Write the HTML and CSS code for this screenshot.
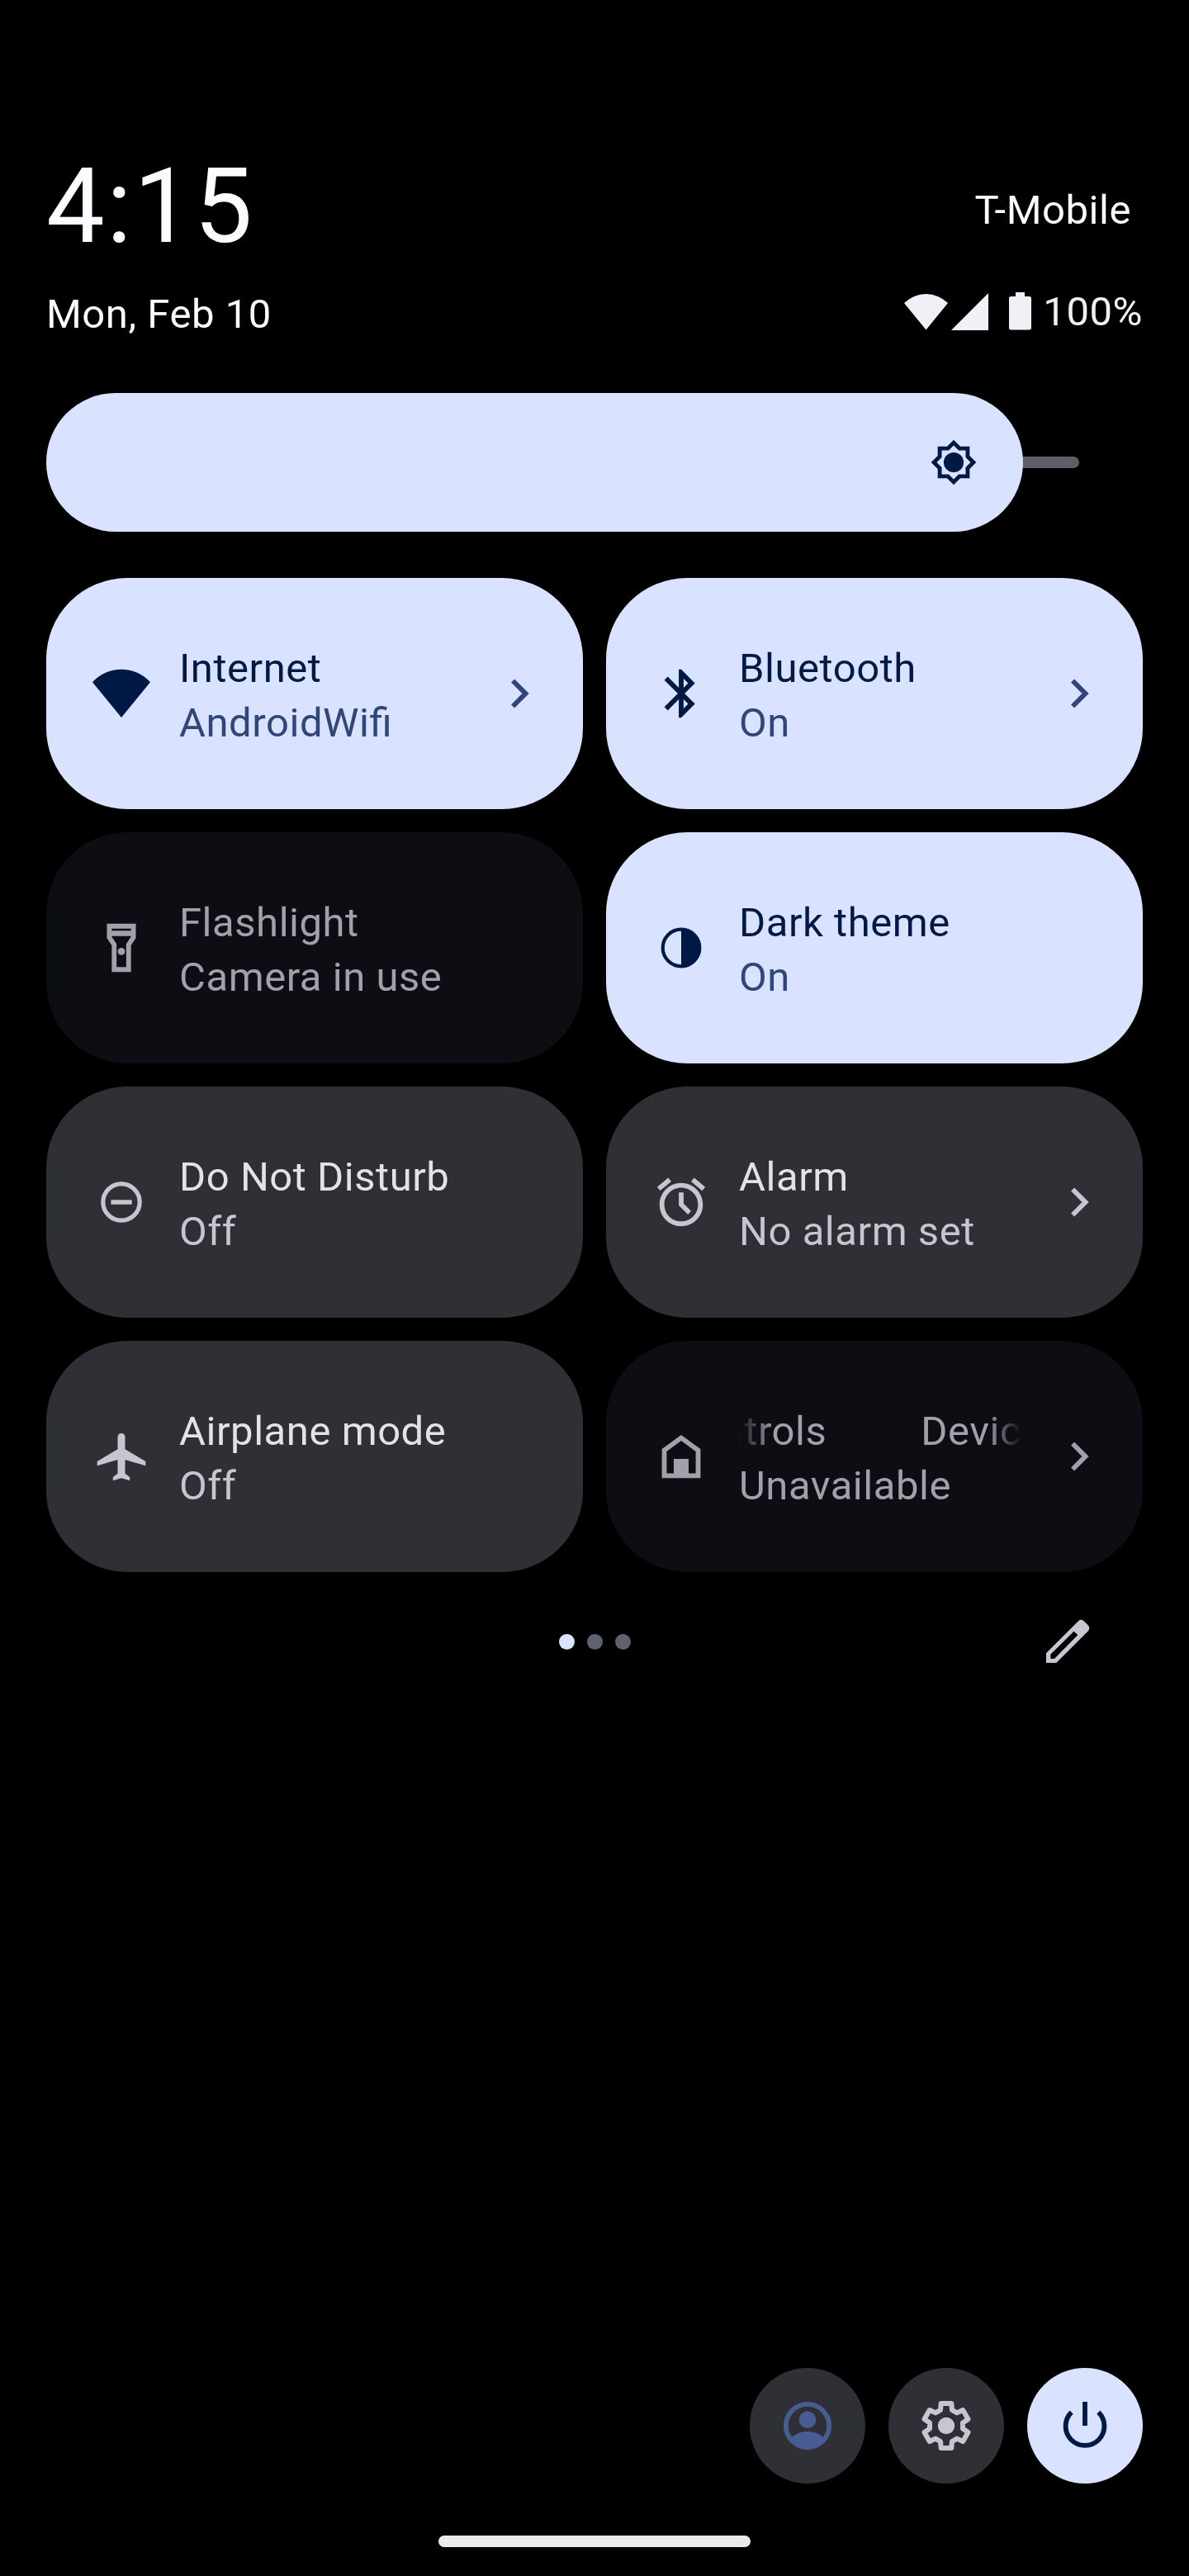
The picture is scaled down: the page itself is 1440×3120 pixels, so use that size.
FILE: index.html
```html
<!DOCTYPE html>
<html lang="en">
<head>
<meta charset="utf-8">
<title>Quick Settings</title>
<link rel="stylesheet" href="styles.css">
</head>
<body>
<header class="header">
  <div class="header-row header-row--clock">
    <div class="clock">4:15</div>
    <div class="carrier">T-Mobile</div>
  </div>
  <div class="header-row header-row--date">
    <div class="date">Mon, Feb 10</div>
    <div class="status">
      <svg class="status-wifi" viewBox="0 0 53 45"><path d="M0 12A37.500 37.500 0 0 1 53 12L26.500 44.500Z"/></svg>
      <svg class="status-signal" viewBox="0 0 45 45"><path d="M45 0V45H0Z"/></svg>
      <svg class="status-battery" viewBox="0 0 27 47"><path d="M8 0H19V5H24.500a2.500 2.500 0 0 1 2.500 2.500V43a2.500 2.500 0 0 1-2.500 2.500H2.500A2.500 2.500 0 0 1 0 43V7.500A2.500 2.500 0 0 1 2.500 5H8Z"/></svg>
      <span>100%</span>
    </div>
  </div>
</header>

<div class="brightness">
  <div class="brightness-fill">
    <svg class="brightness-icon" viewBox="0 0 24 24"><path fill-rule="evenodd" d="M20 15.310L23.310 12 20 8.690V4h-4.690L12 .690 8.690 4H4v4.690L.690 12 4 15.310V20h4.690L12 23.310 15.310 20H20zM18 14.480V18h-3.520L12 20.480 9.520 18H6v-3.520L3.520 12 6 9.520V6h3.520L12 3.520 14.480 6H18v3.520L20.480 12z"/><circle cx="12" cy="12" r="5"/></svg>
  </div>
  <div class="brightness-rail"></div>
</div>

<main class="tiles">
  <section class="tile tile--on">
    <svg class="tile-icon" viewBox="0 0 70 70"><path d="M0 21.300A47.100 47.100 0 0 1 70 21.300L35 64Z"/></svg>
    <div class="tile-text"><div class="tile-label">Internet</div><div class="tile-state">AndroidWifi</div></div>
    <svg class="tile-chevron" viewBox="0 0 24 24"><path d="M10 6L8.590 7.410 13.170 12l-4.580 4.590L10 18l6-6z"/></svg>
  </section>
  <section class="tile tile--on">
    <svg class="tile-icon" viewBox="0 0 24 24"><path fill-rule="evenodd" d="M17.710 7.710L12 2h-1v7.590L6.410 5 5 6.410 10.590 12 5 17.590 6.410 19 11 14.410V22h1l5.710-5.710-4.300-4.290 4.300-4.290zM13 5.830l1.880 1.880L13 9.590V5.830zm1.880 10.460L13 18.170v-3.760l1.880 1.880z"/></svg>
    <div class="tile-text"><div class="tile-label">Bluetooth</div><div class="tile-state">On</div></div>
    <svg class="tile-chevron" viewBox="0 0 24 24"><path d="M10 6L8.590 7.410 13.170 12l-4.580 4.590L10 18l6-6z"/></svg>
  </section>
  <section class="tile tile--disabled">
    <svg class="tile-icon" viewBox="0 0 24 24"><path fill-rule="evenodd" d="M18 2H6v6l2 3v11h8V11l2-3V2zM16 4v.900H8V4h8zM14 10.400V20h-4v-9.610l-2-3V7.100h8v.290l-2 3.010z"/><circle cx="12" cy="13.500" r="1.500"/></svg>
    <div class="tile-text"><div class="tile-label">Flashlight</div><div class="tile-state">Camera in use</div></div>
  </section>
  <section class="tile tile--on">
    <svg class="tile-icon" viewBox="0 0 70 70"><circle cx="35" cy="35" r="22.300" fill="none" stroke="currentColor" stroke-width="4.200"/><path d="M35 11a24 24 0 0 1 0 48z"/></svg>
    <div class="tile-text"><div class="tile-label">Dark theme</div><div class="tile-state">On</div></div>
  </section>
  <section class="tile tile--off">
    <svg class="tile-icon" viewBox="0 0 70 70"><circle cx="35" cy="35" r="22.200" fill="none" stroke="currentColor" stroke-width="5.200"/><path d="M22.500 32.300h25.200v5.500H22.500z"/></svg>
    <div class="tile-text"><div class="tile-label">Do Not Disturb</div><div class="tile-state">Off</div></div>
  </section>
  <section class="tile tile--off">
    <svg class="tile-icon" viewBox="0 0 24 24"><path fill-rule="evenodd" d="M22 5.720l-4.600-3.860-1.290 1.530 4.600 3.860L22 5.720zM7.880 3.390L6.600 1.860 2 5.710l1.290 1.530 4.590-3.850zM11 8h2v4.600l3.100 3.100-1.300 1.400L11 13.400zM12 4c-4.970 0-9 4.030-9 9s4.020 9 9 9c4.970 0 9-4.030 9-9s-4.030-9-9-9zm0 16c-3.870 0-7-3.130-7-7s3.130-7 7-7 7 3.130 7 7-3.130 7-7 7z"/></svg>
    <div class="tile-text"><div class="tile-label">Alarm</div><div class="tile-state">No alarm set</div></div>
    <svg class="tile-chevron" viewBox="0 0 24 24"><path d="M10 6L8.590 7.410 13.170 12l-4.580 4.590L10 18l6-6z"/></svg>
  </section>
  <section class="tile tile--off">
    <svg class="tile-icon" viewBox="-35 -35 70 70"><path d="M-4.500-23.500a4.500 4.500 0 0 1 9 0V-8.700L29.300 6V11.300L4.500 4V20.700L10.200 25V29.200L0 26.300-10.200 29.200V25L-4.500 20.700V4L-29.300 11.300V6L-4.500-8.700Z"/></svg>
    <div class="tile-text"><div class="tile-label">Airplane mode</div><div class="tile-state">Off</div></div>
  </section>
  <section class="tile tile--disabled">
    <svg class="tile-icon" viewBox="-35 -35 70 70"><path fill-rule="evenodd" d="M0-26L23.400-9V26.300H-23.400V-9ZM0-19L-17.600-6V20.400H-9V3H9V20.400H17.600V-6Z"/></svg>
    <div class="tile-text">
      <div class="tile-label tile-label--marquee"><span class="marquee-out">Device controls</span><span>Device controls</span></div>
      <div class="tile-state">Unavailable</div>
    </div>
    <svg class="tile-chevron" viewBox="0 0 24 24"><path d="M10 6L8.590 7.410 13.170 12l-4.580 4.590L10 18l6-6z"/></svg>
  </section>
</main>

<div class="pager">
  <div class="dots"><i class="dot dot--current"></i><i class="dot"></i><i class="dot"></i></div>
  <svg class="edit" viewBox="54 69 210 210"><path fill-rule="evenodd" d="M81 217L197 101Q208 90 219 101L232 114Q244 126 232 138L118 252H81ZM97 221V237H111L196 151 182 137Z"/></svg>
</div>

<footer class="footer">
  <div class="action action--user">
    <svg viewBox="-35 -35 70 70"><circle r="26.200" fill="none" stroke="currentColor" stroke-width="5.800"/><circle cy="-7.300" r="10.200"/><path d="M-19.500 14C-14 9.500-7 7 0 7s14 2.500 19.500 7L18 21 0 28-18 21Z"/></svg>
  </div>
  <div class="action">
    <svg viewBox="-35 -35 70 70"><circle r="10.200"/><path fill="none" stroke="currentColor" stroke-width="6" stroke-linejoin="round" d="M-6.300-27L6.300-27 7-19.100 13-15.600 20.200-19 26.500-8 20-3.500V3.500L26.500 8 20.200 19 13 15.600 7 19.100 6.300 27H-6.300L-7 19.100-13 15.600-20.200 19-26.500 8-20 3.500V-3.500L-26.500-8-20.200-19-13-15.600-7-19.100Z"/></svg>
  </div>
  <div class="action action--power">
    <svg viewBox="-35 -35 70 70"><path d="M-2.900-29H2.900V0H-2.900Z"/><path fill="none" stroke="currentColor" stroke-width="5.800" d="M-16.300-16.300A23.400 23.400 0 1 0 16.300-16.300"/></svg>
  </div>
</footer>
<div class="home-handle"></div>
</body>
</html>
```
FILE: styles.css
```css
* {
  box-sizing: border-box;
}

body {
  margin: 0;
  width: 1440px;
  height: 3120px;
  padding: 176px 56px 35px;
  display: flex;
  flex-direction: column;
  overflow: hidden;
  background: #000;
  color: #fdfbff;
  font: 400 49px/57px Roboto, sans-serif;
  letter-spacing: 0.54px;
  white-space: nowrap;
}

svg {
  display: block;
  flex: none;
  fill: currentColor;
}

.header {
  display: flex;
  flex-direction: column;
  gap: 28px;
}

.header-row {
  display: flex;
  justify-content: space-between;
}

.header-row--clock {
  height: 148px;
  align-items: center;
}

.clock {
  font-size: 126px;
  line-height: 148px;
  letter-spacing: 2.3px;
}

.carrier {
  padding: 9px 14px 0 0;
}

.header-row--date {
  height: 57px;
}

.status {
  display: flex;
  align-items: center;
  height: 51px;
  line-height: 51px;
  color: #f1f0f7;
}

.status-wifi {
  width: 53px;
  height: 45px;
}

.status-signal {
  width: 45px;
  height: 45px;
  margin-left: 4px;
}

.status-battery {
  width: 27px;
  height: 47px;
  margin: 0 14px 0 25px;
}

.brightness {
  display: flex;
  align-items: center;
  height: 168px;
  margin-top: 67px;
}

.brightness-fill {
  position: relative;
  z-index: 1;
  display: flex;
  align-items: center;
  justify-content: flex-end;
  width: 1183px;
  height: 168px;
  padding-right: 55px;
  border-radius: 84px;
  background: #d9e2ff;
  color: #001945;
}

.brightness-icon {
  width: 58px;
  height: 58px;
}

.brightness-rail {
  width: 88px;
  height: 14px;
  margin-left: -20px;
  border-radius: 7px;
  background: #5d6069;
}

.tiles {
  display: grid;
  grid-template-columns: 650px 650px;
  grid-auto-rows: 280px;
  gap: 28px;
  margin-top: 56px;
}

.tile {
  display: flex;
  align-items: center;
  padding: 0 42px 0 56px;
  border-radius: 98px;
}

.tile--on {
  background: #d9e2ff;
  color: #001945;
}

.tile--off {
  background: #2f3036;
  color: #c5c6d0;
}

.tile--disabled {
  background: #0d0e13;
  color: #a2a1ab;
}

.tile-icon,
.tile-chevron {
  width: 70px;
  height: 70px;
}

.tile-text {
  flex: 1;
  min-width: 0;
  margin: 0 35px;
  padding-top: 5px;
  line-height: 66px;
}

.tile-state {
  font-feature-settings: "liga" 1;
}

.tile--off .tile-label {
  color: #e3e2e9;
}

.tile--on .tile-state,
.tile--on .tile-chevron {
  color: #304578;
}

.tile-label--marquee {
  display: flex;
  gap: 114px;
  overflow: hidden;
  -webkit-mask-image: linear-gradient(90deg, transparent, #000 42px, #000 calc(100% - 42px), transparent);
  mask-image: linear-gradient(90deg, transparent, #000 42px, #000 calc(100% - 42px), transparent);
}

.marquee-out {
  margin-left: -237px;
}

.pager {
  display: grid;
  grid-template-columns: 1fr auto 1fr;
  align-items: center;
  height: 168px;
}

.dots {
  grid-column: 2;
  display: flex;
  gap: 15px;
}

.dot {
  width: 19px;
  height: 19px;
  border-radius: 50%;
  background: #5f6371;
}

.dot--current {
  background: #d9e2ff;
}

.edit {
  justify-self: end;
  width: 70px;
  height: 70px;
  margin-right: 56px;
  color: #c8c6d1;
}

.footer {
  display: flex;
  justify-content: flex-end;
  gap: 28px;
  margin-top: auto;
}

.action {
  display: grid;
  place-items: center;
  width: 140px;
  height: 140px;
  border-radius: 50%;
  background: #2f3036;
  color: #c6c5d0;
}

.action svg {
  width: 70px;
  height: 70px;
}

.action--user {
  color: #475d92;
}

.action--power {
  background: #d9e2ff;
  color: #001945;
}

.home-handle {
  align-self: center;
  width: 378px;
  height: 14px;
  margin-top: 63px;
  border-radius: 7px;
  background: #ebebeb;
}
```
